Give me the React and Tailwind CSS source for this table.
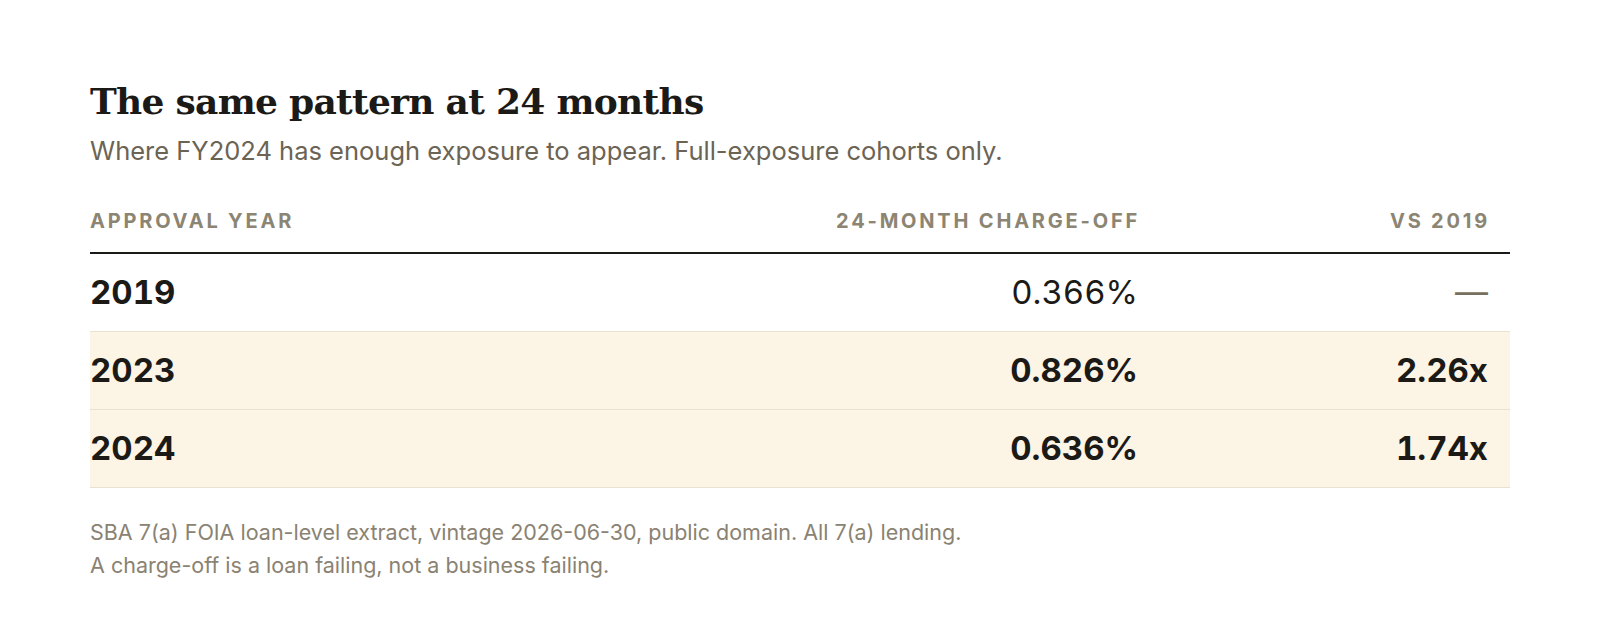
const rows = [
  { year: '2019', rate: '0.366%', vs: '—', hl: false },
  { year: '2023', rate: '0.826%', vs: '2.26x', hl: true },
  { year: '2024', rate: '0.636%', vs: '1.74x', hl: true },
];

export default function App() {
  return (
    <div className="min-h-screen bg-white px-[90px] pt-[79px] font-['Inter',sans-serif] text-[#1c1a17]">
      <h2 className="font-['DejaVu_Serif',serif] text-[36px] font-bold leading-[44px] tracking-[-0.02em]">
        The same pattern at 24 months
      </h2>
      <p className="mt-[11px] text-[25.5px] leading-[34px] text-[#6b6454]">
        Where FY2024 has enough exposure to appear. Full-exposure cohorts only.
      </p>

      <div className="mt-[41px]">
        <div className="grid grid-cols-[1fr_420px_350px] border-b-2 border-[#1c1a17] pb-[19px] text-[20px] font-bold uppercase leading-[24px] tracking-[0.14em] text-[#8c8573]">
          <div>Approval year</div>
          <div className="pr-[20px] text-right">24-month charge-off</div>
          <div className="pr-[20px] text-right">vs 2019</div>
        </div>
        {rows.map((r) => (
          <div
            key={r.year}
            className={`grid grid-cols-[1fr_420px_350px] items-center border-b border-[#e9e2d1] h-[78px] text-[33px] tabular-nums ${
              r.hl ? 'bg-[#fcf5e6] font-bold' : ''
            }`}
          >
            <div className="font-bold">{r.year}</div>
            <div className="pr-[22px] text-right">{r.rate}</div>
            <div className={`pr-[22px] text-right ${r.hl ? '' : 'text-[#77705f]'}`}>{r.vs}</div>
          </div>
        ))}
      </div>

      <div className="mt-[28px] text-[21.5px] leading-[33px] text-[#8a8272]">
        <p>SBA 7(a) FOIA loan-level extract, vintage 2026-06-30, public domain. All 7(a) lending.</p>
        <p>A charge-off is a loan failing, not a business failing.</p>
      </div>
    </div>
  );
}
